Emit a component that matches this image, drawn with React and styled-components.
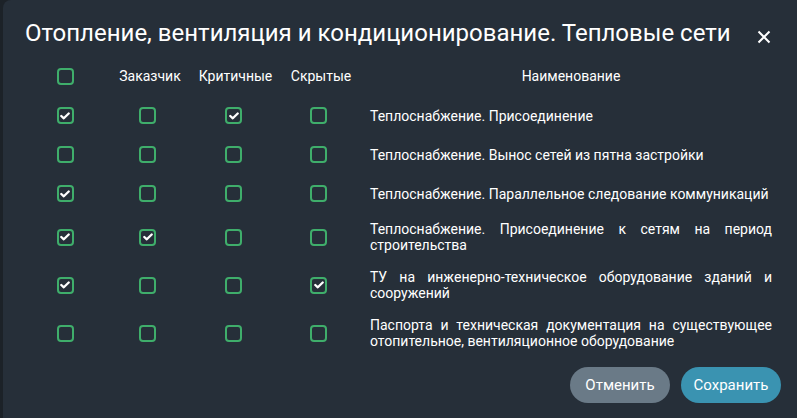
import React, { useState } from 'react';
import styled, { createGlobalStyle } from 'styled-components';

const GlobalStyle = createGlobalStyle`
  html, body {
    margin: 0;
    padding: 0;
    background: #1c2228;
    overflow: hidden;
  }
  body {
    font-family: Roboto, "Liberation Sans", sans-serif;
  }
`;

const Page = styled.div`
  width: 797px;
  height: 418px;
  padding: 0 0 0 3px;
  box-sizing: border-box;
  overflow: hidden;
`;

const Dialog = styled.div`
  width: 820px;
  height: 440px;
  background: #262f39;
  border-radius: 8px 0 0 8px;
  padding: 18px 0 0 22px;
  box-sizing: border-box;
  color: #ffffff;
`;

const Header = styled.div`
  display: flex;
  align-items: center;
  width: 751px;
  height: 30px;
`;

const Title = styled.h2`
  margin: 0;
  flex: 1;
  font-size: 24px;
  font-weight: 400;
  line-height: 30px;
  white-space: nowrap;
`;

const CloseButton = styled.button`
  width: 24px;
  height: 24px;
  padding: 0;
  border: none;
  background: none;
  display: flex;
  align-items: center;
  justify-content: center;
  cursor: pointer;
  margin-top: 8px;
`;

const Table = styled.div`
  width: 747px;
  margin-top: 8px;
  display: grid;
  grid-template-columns: 80px 85px 87px 83px 1fr;
`;

const HeadCell = styled.div`
  height: 40px;
  display: flex;
  align-items: center;
  justify-content: center;
  font-size: 14px;
  padding-left: ${p => p.$shift || 0}px;
`;

const Cell = styled.div`
  min-height: 39px;
  box-sizing: border-box;
  padding: 8px 0;
  display: flex;
  align-items: center;
  justify-content: center;
`;

const NameCell = styled(Cell)`
  justify-content: flex-start;
  padding-left: 10px;
  font-size: 14px;
  line-height: 16px;
  text-align: justify;
`;

const Box = styled.span`
  width: 17px;
  height: 17px;
  box-sizing: border-box;
  border: 2px solid #3fae6b;
  border-radius: 4px;
  display: inline-flex;
  align-items: center;
  justify-content: center;
  cursor: pointer;
`;

const Footer = styled.div`
  width: 756px;
  margin-top: 10px;
  display: flex;
  justify-content: flex-end;
  gap: 11px;
`;

const Button = styled.button`
  width: 100px;
  height: 36px;
  padding: 0;
  border: none;
  border-radius: 18px;
  font-family: Roboto, "Liberation Sans", sans-serif;
  font-size: 15px;
  color: #ffffff;
  background: ${p => (p.$primary ? '#3a93b1' : '#6a7a87')};
  cursor: pointer;
`;

const Check = ({ checked, onClick }) => (
  <Box onClick={onClick}>
    {checked && (
      <svg width="10" height="8" viewBox="0 0 10 8">
        <path d="M1.3 4 L3.8 6.3 L8.7 1.5" stroke="#fff" strokeWidth="2.3" fill="none" strokeLinecap="round" strokeLinejoin="round" />
      </svg>
    )}
  </Box>
);

const rows = [
  { name: 'Теплоснабжение. Присоединение', v: [true, false, true, false] },
  { name: 'Теплоснабжение. Вынос сетей из пятна застройки', v: [false, false, false, false] },
  { name: 'Теплоснабжение. Параллельное следование коммуникаций', v: [true, false, false, false] },
  { name: 'Теплоснабжение. Присоединение к сетям на период строительства', v: [true, true, false, false] },
  { name: 'ТУ на инженерно-техническое оборудование зданий и сооружений', v: [true, false, false, true] },
  { name: 'Паспорта и техническая документация на существующее отопительное, вентиляционное оборудование', v: [false, false, false, false] },
];

export default function App() {
  const [data, setData] = useState(rows);
  const [all, setAll] = useState(false);

  const toggle = (r, c) =>
    setData(d => d.map((row, i) => (i === r ? { ...row, v: row.v.map((x, j) => (j === c ? !x : x)) } : row)));

  return (
    <>
      <GlobalStyle />
      <Page>
        <Dialog>
          <Header>
            <Title>Отопление, вентиляция и кондиционирование. Тепловые сети</Title>
            <CloseButton aria-label="close">
              <svg width="14" height="14" viewBox="0 0 14 14">
                <path d="M1.5 1.5 L12.5 12.5 M12.5 1.5 L1.5 12.5" stroke="#fff" strokeWidth="2" />
              </svg>
            </CloseButton>
          </Header>
          <Table>
            <HeadCell><Check checked={all} onClick={() => setAll(!all)} /></HeadCell>
            <HeadCell $shift={5}>Заказчик</HeadCell>
            <HeadCell $shift={4}>Критичные</HeadCell>
            <HeadCell $shift={5}>Скрытые</HeadCell>
            <HeadCell $shift={10}>Наименование</HeadCell>
            {data.map((row, r) => (
              <React.Fragment key={r}>
                {row.v.map((val, c) => (
                  <Cell key={c}><Check checked={val} onClick={() => toggle(r, c)} /></Cell>
                ))}
                <NameCell>{row.name}</NameCell>
              </React.Fragment>
            ))}
          </Table>
          <Footer>
            <Button>Отменить</Button>
            <Button $primary>Сохранить</Button>
          </Footer>
        </Dialog>
      </Page>
    </>
  );
}
